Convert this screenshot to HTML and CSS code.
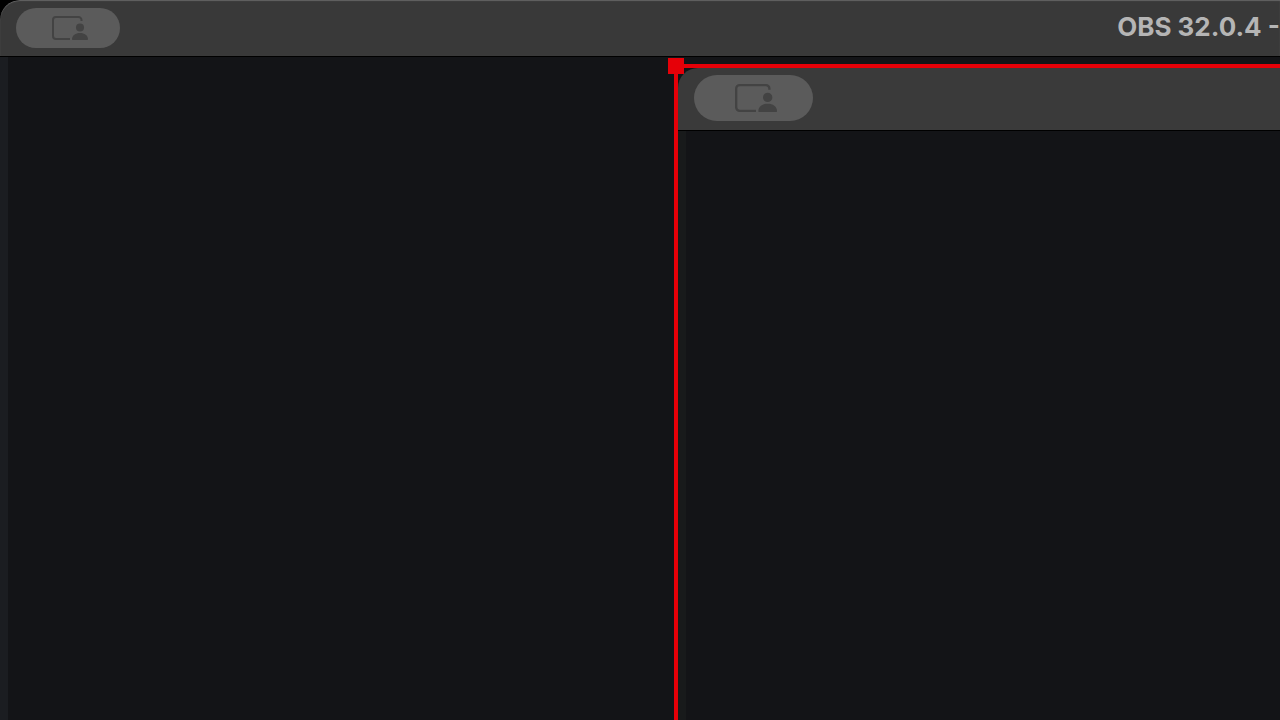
FILE: index.html
```
<!DOCTYPE html>
<html lang="en">
<head>
    <meta charset="UTF-8">
    <meta name="viewport" content="width=device-width, initial-scale=1.0">
    <title>OBS 32.0.4</title>
    <link rel="stylesheet" href="styles.css">
</head>
<body>
    <svg class="symbols" aria-hidden="true">
        <symbol id="presenter" viewBox="0 0 36 24">
            <path d="M29.500 5V4a3 3 0 0 0-3-3H4a3 3 0 0 0-3 3v16a3 3 0 0 0 3 3h14" fill="none" stroke="currentColor" stroke-width="2"/>
            <circle cx="28" cy="11.500" r="4" fill="currentColor"/>
            <path d="M20 23.300c0-4 3.500-6.300 8-6.300s8 2.300 8 6.300c0 .5-.3.700-.8.700H20.800c-.5 0-.8-.2-.8-.7z" fill="currentColor"/>
        </symbol>
    </svg>

    <div class="window">
        <header class="titlebar">
            <button class="pill" type="button" aria-label="Presenter overlay">
                <svg class="pill-icon"><use href="#presenter"/></svg>
            </button>
            <h1 class="title">OBS 32.0.4 -</h1>
        </header>

        <main class="canvas">
            <!-- selected capture source, runs off the right and bottom edges -->
            <section class="source">
                <div class="captured">
                    <div class="titlebar">
                        <button class="pill" type="button" aria-label="Presenter overlay in capture">
                            <svg class="pill-icon"><use href="#presenter"/></svg>
                        </button>
                    </div>
                    <div class="canvas"></div>
                </div>
                <span class="handle"></span>
            </section>
        </main>
    </div>
</body>
</html>
```

FILE: styles.css
```
* {
    box-sizing: border-box;
}
body {
    margin: 0;
    background: #000;
    font-family: Inter, "Liberation Sans", sans-serif;
    overflow: hidden;
}
.symbols {
    position: absolute;
    width: 0;
    height: 0;
}
.window {
    display: flex;
    flex-direction: column;
    height: 100vh;
    border-top-left-radius: 20px;
    overflow: hidden;
}
.titlebar {
    display: flex;
    align-items: center;
    justify-content: space-between;
    flex: none;
    height: 57px;
    padding-left: 16px;
    background: #393939;
    border-bottom: 1px solid #000;
    border-top-left-radius: 20px;
    box-shadow: inset 0 1px 1px #646464;
}
.pill {
    display: flex;
    align-items: center;
    justify-content: center;
    width: 104px;
    height: 40px;
    padding: 0 0 0 4px;
    border: none;
    border-radius: 20px;
    background: #5b5b5b;
    color: #434343;
}
.pill-icon {
    width: 36px;
    height: 24px;
}
.title {
    margin: 0;
    padding-bottom: 2px;
    font-size: 26px;
    line-height: 32px;
    font-weight: 700;
    color: #b5b5b5;
    white-space: nowrap;
}
.canvas {
    position: relative;
    flex: 1;
    background: #131417;
    border-left: 8px solid #1b1d21;
}

/* Selected source */
.source {
    position: absolute;
    top: 7px;
    left: 666px;
    right: 0;
    bottom: 0;
    background: #131417;
    border-top: 4px solid #e60008;
    border-left: 4px solid #e60008;
}
.captured {
    display: flex;
    flex-direction: column;
    height: 100%;
}
.captured .titlebar {
    height: 63px;
    padding-bottom: 2px;
    background: #3a3a3a;
    box-shadow: none;
}
.captured .pill {
    width: 119px;
    height: 46px;
    border-radius: 23px;
}
.captured .pill-icon {
    width: 42px;
    height: 28px;
}
.captured .canvas {
    border-left-color: #181a1b;
}
.handle {
    position: absolute;
    top: -10px;
    left: -10px;
    width: 16px;
    height: 16px;
    background: #e60008;
}
```
